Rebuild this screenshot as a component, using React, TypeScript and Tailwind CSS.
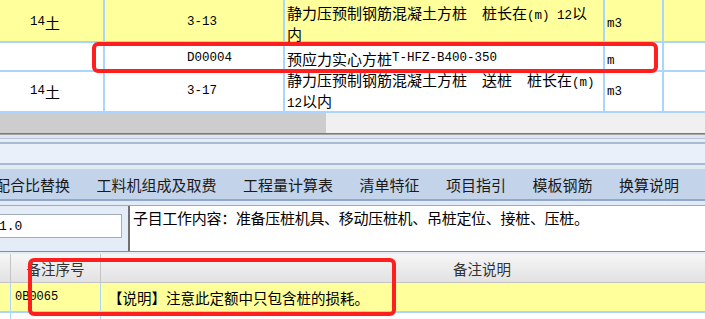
import React from "react";

const LINE = "border-[#a9d6fa]";

function M({ children }: { children: React.ReactNode }) {
  return <span className="font-['Liberation_Mono',monospace] text-[12.5px]">{children}</span>;
}

function Cell({ className = "", children }: { className?: string; children?: React.ReactNode }) {
  return (
    <div className={`flex shrink-0 items-center border-r-2 border-[#a9d6fa] ${className}`}>
      {children}
    </div>
  );
}

const tabs = ["配合比替换", "工料机组成及取费", "工程量计算表", "清单特征", "项目指引", "模板钢筋", "换算说明"];

export default function App() {
  return (
    <div className="relative h-[319px] w-[705px] overflow-hidden bg-white font-['Noto_Sans_CJK_SC',sans-serif] text-[15px] leading-[17px] text-black">
      {/* Top grid */}
      <div className={`flex h-[43px] border-b-2 bg-[#ffff9c] ${LINE}`}>
        <Cell className="w-[105px] pl-[30px] pt-1">
          <M>14</M>土
        </Cell>
        <Cell className="w-[180px] pl-[82px] pt-1">
          <M>3-13</M>
        </Cell>
        <Cell className="w-[320px] pl-[2px] pt-[5px]">
          <div>
            静力压预制钢筋混凝土方桩　桩长在<M>(m) 12</M>以
            <br />内
          </div>
        </Cell>
        <Cell className="w-[59px] pl-[2px] pt-2">
          <M>m3</M>
        </Cell>
        <div className="flex-1" />
      </div>
      <div className={`flex h-[29px] border-b-2 ${LINE}`}>
        <Cell className="w-[105px]" />
        <Cell className="w-[180px] pl-[82px] pt-[3px]">
          <M>D00004</M>
        </Cell>
        <Cell className="w-[320px] pl-[2px] pt-[3px]">
          预应力实心方桩<M>T-HFZ-B400-350</M>
        </Cell>
        <Cell className="w-[59px] pl-[2px] pt-[10px]">
          <M>m</M>
        </Cell>
        <div className="flex-1" />
      </div>
      <div className={`flex h-[41px] border-b-2 ${LINE}`}>
        <Cell className="w-[105px] pl-[30px]">
          <M>14</M>土
        </Cell>
        <Cell className="w-[180px] pl-[82px]">
          <M>3-17</M>
        </Cell>
        <Cell className="w-[320px] pl-[2px]">
          <div>
            静力压预制钢筋混凝土方桩　送桩　桩长在<M>(m)</M>
            <br />
            <M>12</M>以内
          </div>
        </Cell>
        <Cell className="w-[59px] pl-[2px] pt-[2px]">
          <M>m3</M>
        </Cell>
        <div className="flex-1" />
      </div>

      {/* Horizontal scrollbar */}
      <div className="flex h-[20px] bg-[#f0f0f0]">
        <div className="w-[326px] bg-[#cdcdcd]" />
      </div>

      {/* Splitter bands */}
      <div className="h-px bg-[#7a7a7a]" />
      <div className="h-px bg-[#a6a6a6]" />
      <div className="h-[3px] bg-[#dfe6f0]" />
      <div className="h-px bg-[#b5c5da]" />
      <div className="h-[3px] bg-[#e6edf6]" />
      <div className="h-[2px] bg-[#a9bbd2]" />
      <div className="h-[19px] bg-[#e9f0fa]" />
      <div className="h-[2px] bg-[#a9bbd2]" />
      <div className="h-[4px] bg-[#e2eaf5]" />

      {/* Tab strip */}
      <div className="flex h-[30px] items-center gap-[26.5px] bg-[#c2d3ea] pl-0 text-[#1a1a1a]">
        {tabs.map((t, i) => (
          <span key={t} className={`shrink-0 whitespace-nowrap ${i === 0 ? "-ml-[5px]" : ""}`}>
            {t}
          </span>
        ))}
      </div>
      <div className="h-[2px] bg-[#91a9c9]" />
      <div className="h-[4px] bg-[#e2eaf5]" />
      <div className="h-px bg-[#a0a9b6]" />

      {/* Quantity + work content */}
      <div className="flex h-[45px] bg-[#e4ecf7]">
        <div className="w-[128px] shrink-0 pt-[8px]">
          <div className="flex h-[24px] w-[122px] items-center border border-l-0 border-[#a3aebd] bg-white">
            <span className="-ml-px font-['Liberation_Mono',monospace] text-[13px]">1.0</span>
          </div>
        </div>
        <div className="w-[2px] bg-[#707070]" />
        <div className="flex-1 bg-white pl-[3px] pt-[3px] text-[15px] tracking-[-0.3px]">
          子目工作内容：准备压桩机具、移动压桩机、吊桩定位、接桩、压桩。
        </div>
      </div>
      <div className="h-[1px] bg-[#8c8c8c]" />
      <div className="h-[2px] bg-[#e4ecf7]" />

      {/* Remark grid */}
      <div className="flex h-[29px] border-b border-[#c4c4c4] bg-gradient-to-b from-[#f6f6f6] to-[#e2e2e2] text-[14.5px] text-[#333]">
        <div className="w-[11px] shrink-0 border-r border-[#c4c4c4]" />
        <div className="flex w-[90px] shrink-0 items-center justify-center border-r border-[#c4c4c4]">备注序号</div>
        <div className="flex flex-1 items-center pl-[352px]">备注说明</div>
      </div>
      <div className={`flex h-[30px] border-b-2 bg-[#ffff9c] text-[14.5px] ${LINE}`}>
        <div className={`w-[11px] shrink-0 border-r ${LINE}`} />
        <div className={`flex w-[90px] shrink-0 items-center border-r pl-[4px] ${LINE}`}>
          <span className="font-['Liberation_Mono',monospace] text-[12px]">0B0065</span>
        </div>
        <div className="flex flex-1 items-center pl-[7px]">【说明】注意此定额中只包含桩的损耗。</div>
      </div>
      <div className="flex h-[6px]">
        <div className={`w-[11px] border-r ${LINE}`} />
        <div className={`w-[90px] border-r ${LINE}`} />
      </div>

      {/* Red annotation boxes */}
      <div className="pointer-events-none absolute left-[92px] top-[42px] h-[31px] w-[566px] rounded-[6px] border-4 border-[#ff1f1f]" />
      <div className="pointer-events-none absolute left-[28px] top-[258px] h-[58px] w-[368px] rounded-[6px] border-4 border-[#ff1f1f]" />
    </div>
  );
}
